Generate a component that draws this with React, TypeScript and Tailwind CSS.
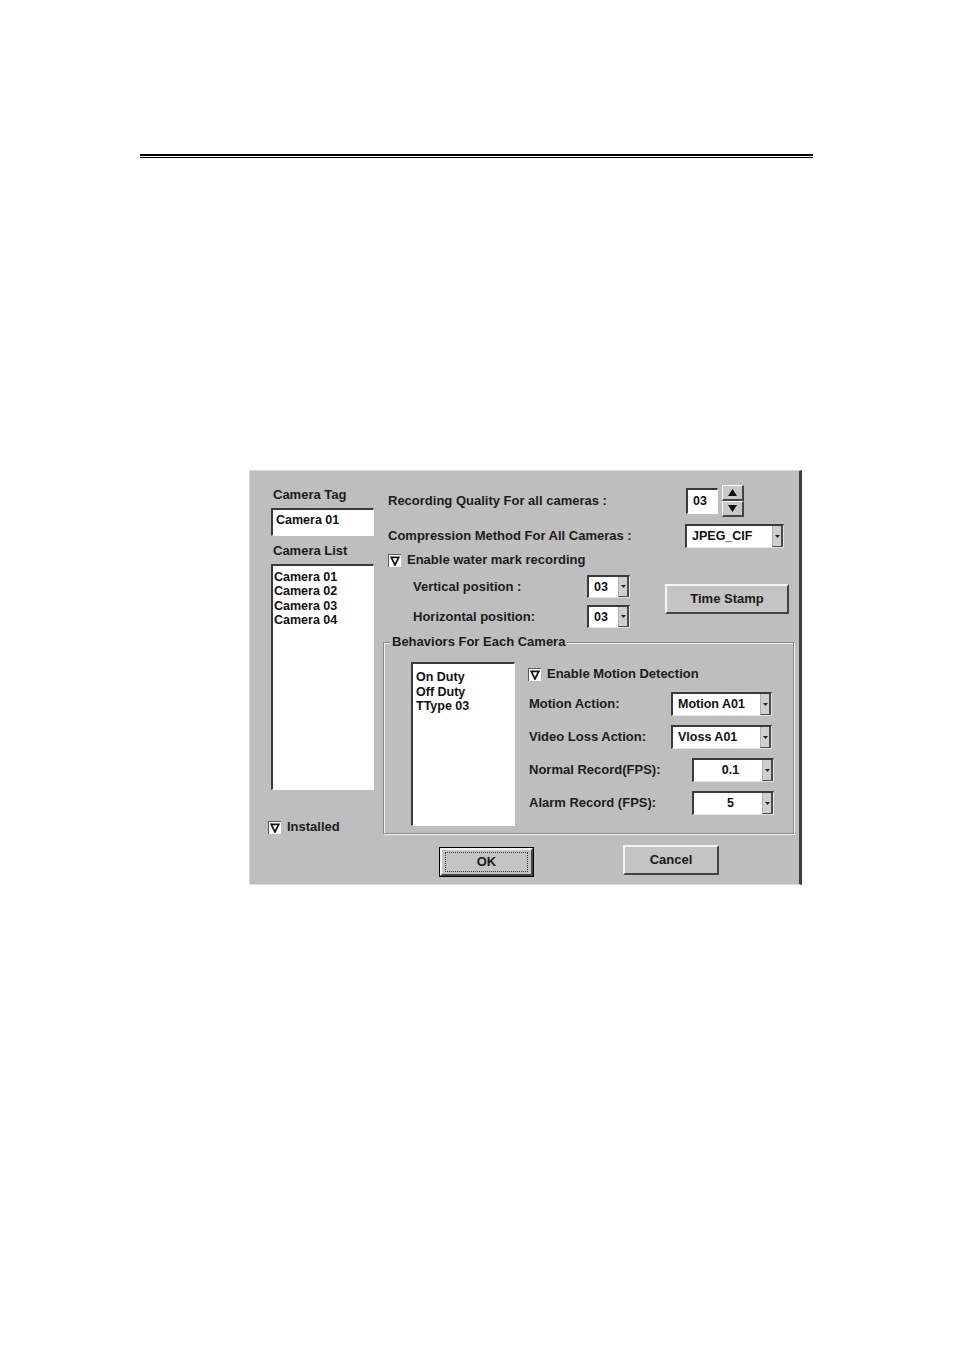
import React from "react";

const Check = () => (
  <span className="flex h-[13px] w-[13px] shrink-0 items-center justify-center border-t border-l border-t-[#5a5a5a] border-l-[#5a5a5a] bg-white">
    <svg width="10" height="10" viewBox="0 0 10 10">
      <path d="M1.2 1.3 H8.8 L5 9 Z" fill="none" stroke="#111" strokeWidth="1.7" />
    </svg>
  </span>
);

const Arrow = () => (
  <svg width="5" height="3" viewBox="0 0 5 3">
    <path d="M0 0H5L2.5 3Z" fill="#222" />
  </svg>
);

// sunken combo box with the small grey arrow button at the right
const Drop = ({ value, w, center }: { value: string; w: string; center?: boolean }) => (
  <div
    className={`flex h-full ${w} border-t-2 border-l-2 border-t-[#3a3a3a] border-l-[#3a3a3a] border-b border-r border-b-[#e4e4e4] border-r-[#e4e4e4] bg-white`}
  >
    <span
      className={`flex flex-1 items-center whitespace-nowrap pl-[5px] text-[12.5px] font-bold text-[#111] ${
        center ? "justify-center" : ""
      }`}
    >
      {value}
    </span>
    <span className="flex w-[11px] items-center justify-center border-l border-l-[#b0b0b0] border-r-2 border-r-[#4a4a4a] border-b border-b-[#4a4a4a] bg-[#cfcfcf]">
      <Arrow />
    </span>
  </div>
);

const Btn = ({ label, w, isDefault }: { label: string; w: string; isDefault?: boolean }) => (
  <div className={`${w} h-[30px] ${isDefault ? "border border-black" : ""}`}>
    <div className="flex h-full w-full items-center justify-center border-t-2 border-l-2 border-t-[#f4f4f4] border-l-[#f4f4f4] border-b-2 border-r-2 border-b-[#444] border-r-[#444] bg-[#c4c4c4]">
      {isDefault ? (
        <div className="flex h-[calc(100%-4px)] w-[calc(100%-6px)] items-center justify-center border border-dotted border-[#333] text-[13px] font-bold text-[#1a1a1a]">
          {label}
        </div>
      ) : (
        <span className="text-[13px] font-bold text-[#1a1a1a]">{label}</span>
      )}
    </div>
  </div>
);

const SpinBtn = ({ up }: { up?: boolean }) => (
  <div className="flex h-[16px] w-[22px] items-center justify-center border-t border-l border-t-white border-l-white border-b-2 border-r-2 border-b-[#444] border-r-[#444] bg-[#c8c8c8]">
    <svg width="9" height="7" viewBox="0 0 9 7">
      <path d={up ? "M4.5 0L9 7H0Z" : "M0 0H9L4.5 7Z"} fill="#111" />
    </svg>
  </div>
);

export default function App() {
  const label = "text-[13px] font-bold text-[#1c1c1c] whitespace-nowrap";
  return (
    <div className="h-[1350px] w-[954px] bg-white font-['Liberation_Sans',Arial,sans-serif]">
      {/* double rule at the top of the page */}
      <div className="pl-[140px] pt-[154px]">
        <div className="w-[673px] border-t-2 border-black" />
        <div className="mt-[1px] w-[673px] border-t-[1.5px] border-black" />
      </div>

      {/* dialog */}
      <div className="ml-[249px] mt-[312px] flex h-[415px] w-[553px] flex-col border-t border-l border-t-[#d6d6d6] border-l-[#d6d6d6] border-r-[3px] border-r-[#3e3e3e] border-b border-b-[#dedede] bg-[#bebebe]">
        <div className="flex h-[363px]">
          {/* left column */}
          <div className="ml-[21px] flex w-[103px] flex-col">
            <div className={`mt-[17px] pl-[2px] leading-[14px] ${label}`}>Camera Tag</div>
            <div className="mt-[6px] flex h-[28px] items-start border-t-2 border-l-2 border-t-[#3a3a3a] border-l-[#3a3a3a] border-b border-r border-b-white border-r-white bg-white pl-[3px] pt-[2px] text-[12.5px] font-bold leading-[16px] text-[#111]">
              Camera 01
            </div>
            <div className={`mt-[8px] pl-[2px] leading-[14px] ${label}`}>Camera List</div>
            <div className="mt-[6px] h-[230px] border-t-2 border-l-2 border-t-[#3a3a3a] border-l-[#3a3a3a] border-b border-r border-b-white border-r-white bg-white pl-[1px] pt-[4px] text-[12.5px] font-bold leading-[14.5px] text-[#111]">
              <div>Camera 01</div>
              <div>Camera 02</div>
              <div>Camera 03</div>
              <div>Camera 04</div>
            </div>
            <div className="-ml-[3px] mt-[30px] flex items-center gap-[6px]">
              <Check />
              <span className={`leading-[14px] ${label}`}>Installed</span>
            </div>
          </div>

          {/* right area */}
          <div className="ml-[9px] flex w-[411px] flex-col pt-[14px]">
            <div className="flex h-[32px] items-center pl-[5px]">
              <span className={`w-[298px] ${label}`}>Recording Quality For all cameras :</span>
              <div className="flex h-[26px] w-[32px] items-center border-t-2 border-l-2 border-t-[#3a3a3a] border-l-[#3a3a3a] border-b border-r border-b-white border-r-white bg-white pl-[5px] text-[12.5px] font-bold text-[#111]">
                03
              </div>
              <div className="ml-[4px] flex flex-col">
                <SpinBtn up />
                <SpinBtn />
              </div>
            </div>

            <div className="mt-[7px] flex h-[24px] items-center pl-[5px]">
              <span className={`w-[297px] ${label}`}>Compression Method For All Cameras :</span>
              <Drop value="JPEG_CIF" w="w-[99px]" />
            </div>

            <div className="mt-[5px] flex h-[14px] items-center gap-[6px] pl-[5px]">
              <Check />
              <span className={label}>Enable water mark recording</span>
            </div>

            <div className="mt-[8px] flex">
              <div className="flex flex-col pl-[30px]">
                <div className="flex h-[23px] items-center">
                  <span className={`w-[174px] ${label}`}>Vertical position :</span>
                  <Drop value="03" w="w-[43px]" />
                </div>
                <div className="mt-[7px] flex h-[23px] items-center">
                  <span className={`w-[174px] ${label}`}>Horizontal position:</span>
                  <Drop value="03" w="w-[43px]" />
                </div>
              </div>
              <div className="ml-[35px] mt-[9px]">
                <Btn label="Time Stamp" w="w-[124px]" />
              </div>
            </div>

            {/* group box */}
            <div className="relative mt-[14px] h-[192px] border border-[#8a8a8a] shadow-[inset_1px_1px_0_#f2f2f2,1px_1px_0_#f2f2f2]">
              <span className={`absolute -top-[8px] left-[6px] bg-[#bebebe] px-[2px] leading-[14px] ${label}`}>
                Behaviors For Each Camera
              </span>
              <div className="flex pl-[27px] pt-[19px]">
                <div className="h-[164px] w-[104px] border-t-2 border-l-2 border-t-[#3a3a3a] border-l-[#3a3a3a] border-b border-r border-b-white border-r-white bg-white pl-[3px] pt-[6px] text-[12.5px] font-bold leading-[14.5px] text-[#111]">
                  <div>On Duty</div>
                  <div>Off Duty</div>
                  <div>TType 03</div>
                </div>
                <div className="ml-[13px] flex flex-col">
                  <div className="mt-[5px] flex h-[14px] items-center gap-[6px]">
                    <Check />
                    <span className={label}>Enable Motion Detection</span>
                  </div>
                  <div className="mt-[11px] flex h-[24px] items-center pl-[1px]">
                    <span className={`w-[142px] ${label}`}>Motion Action:</span>
                    <Drop value="Motion A01" w="w-[101px]" />
                  </div>
                  <div className="mt-[9px] flex h-[24px] items-center pl-[1px]">
                    <span className={`w-[142px] ${label}`}>Video Loss Action:</span>
                    <Drop value="Vloss A01" w="w-[101px]" />
                  </div>
                  <div className="mt-[9px] flex h-[24px] items-center pl-[1px]">
                    <span className={`w-[163px] ${label}`}>Normal Record(FPS):</span>
                    <Drop value="0.1" w="w-[82px]" center />
                  </div>
                  <div className="mt-[9px] flex h-[24px] items-center pl-[1px]">
                    <span className={`w-[163px] ${label}`}>Alarm Record (FPS):</span>
                    <Drop value="5" w="w-[82px]" center />
                  </div>
                </div>
              </div>
            </div>
          </div>
        </div>

        {/* OK / Cancel */}
        <div className="flex items-start pl-[189px] pt-[11px]">
          <div className="mt-[2px]">
            <Btn label="OK" w="w-[95px]" isDefault />
          </div>
          <div className="ml-[89px]">
            <Btn label="Cancel" w="w-[96px]" />
          </div>
        </div>
      </div>
    </div>
  );
}
